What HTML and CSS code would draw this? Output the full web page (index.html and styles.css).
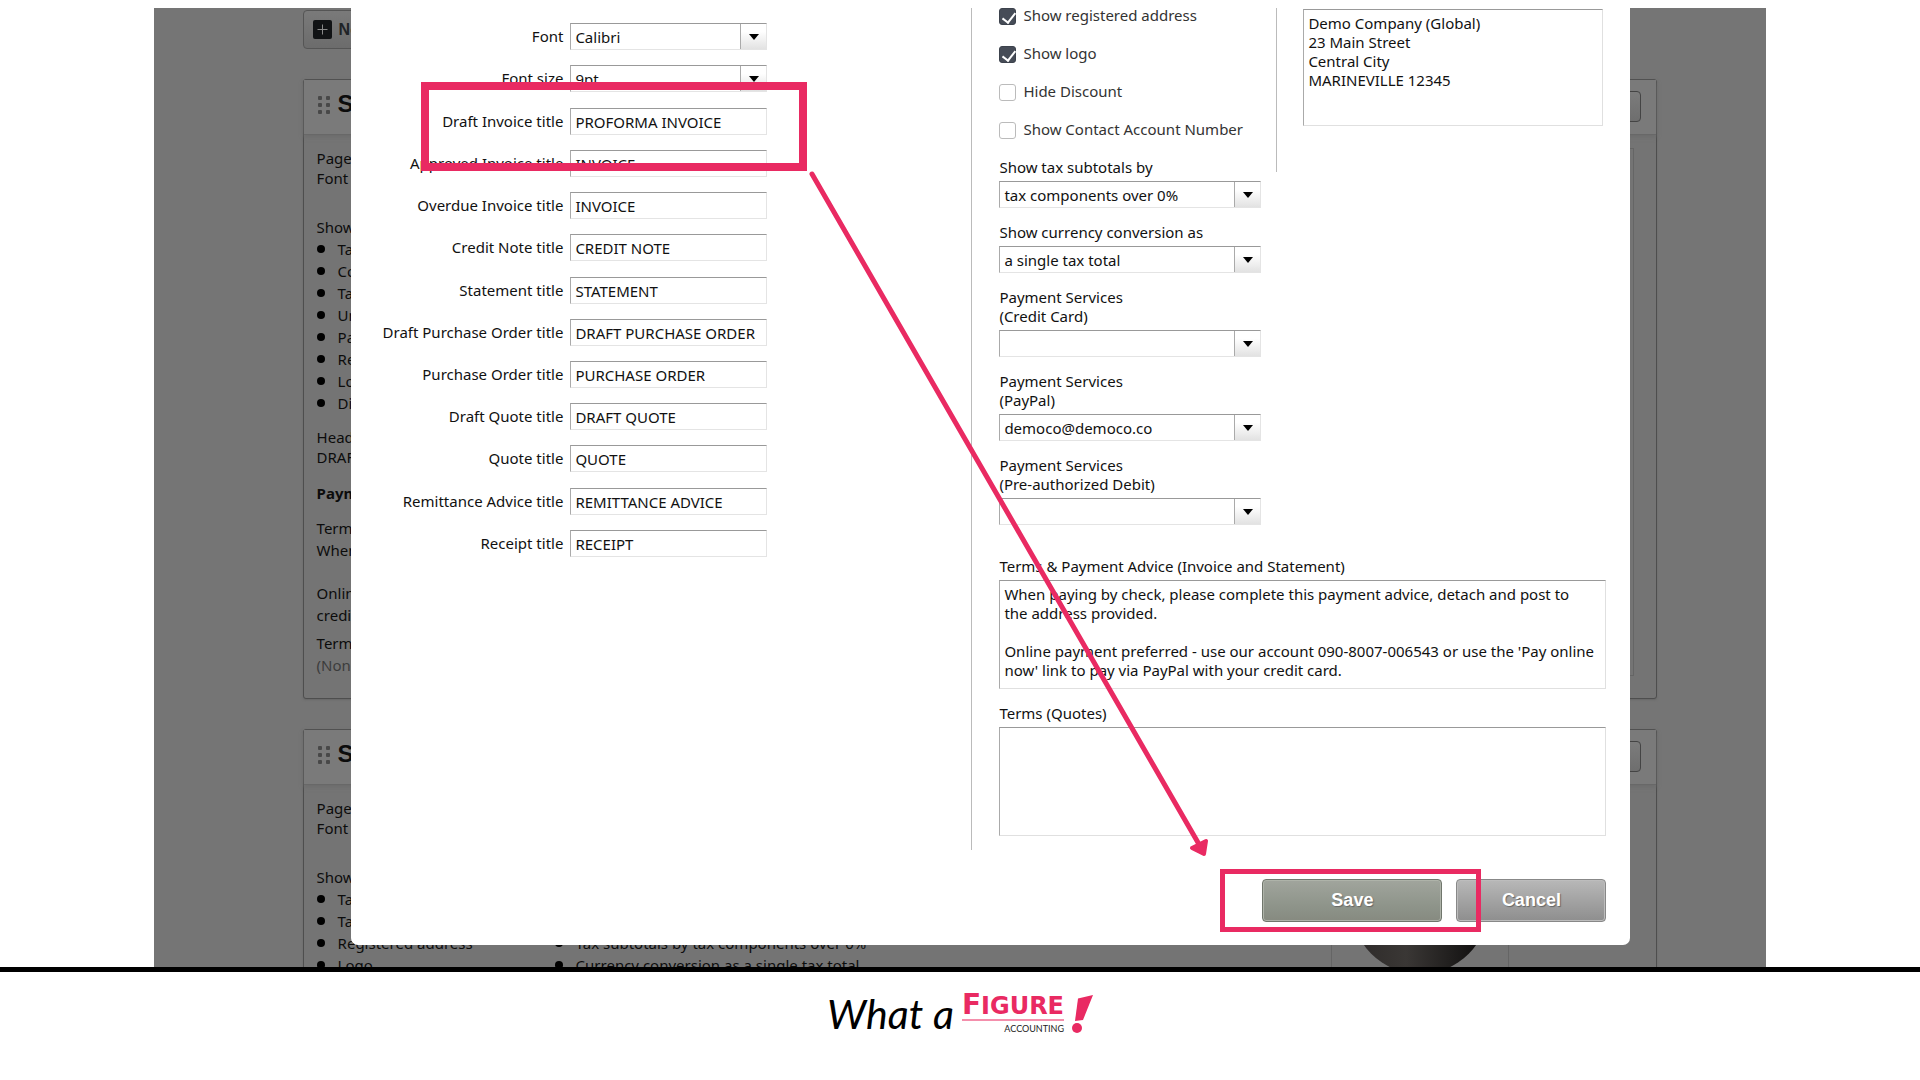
FILE: index.html
```html
<!DOCTYPE html>
<html lang="en">
<head>
<meta charset="utf-8">
<title>Invoice settings</title>
<link rel="stylesheet" href="styles.css">
</head>
<body>
<main class="stage">

  <div class="backdrop" aria-hidden="true">
    <button class="new-theme" type="button" tabindex="-1">
      <svg class="plus" viewBox="0 0 19 19"><rect width="19" height="19" rx="2" fill="#111315"/><path d="M9.500 4.500v10M4.500 9.500h10" stroke="#8a8a8a" stroke-width="1"/></svg>
      New Branding Theme
    </button>

    <section class="card">
      <header class="card-head">
        <svg class="grip" viewBox="0 0 12 20"><g fill="#484848"><rect width="4" height="4" rx="1"/><rect x="8" width="4" height="4" rx="1"/><rect y="7" width="4" height="4" rx="1"/><rect x="8" y="7" width="4" height="4" rx="1"/><rect y="14" width="4" height="4" rx="1"/><rect x="8" y="14" width="4" height="4" rx="1"/></g></svg>
        <h2>Standard</h2>
        <button class="options" type="button" tabindex="-1"></button>
      </header>
      <div class="card-body">
        <div class="details">
          <p>Page size: A4<br>Font Calibri, 9pt</p>
          <div class="shown">
            <h3>Show</h3>
            <ul>
              <li>Tax number</li>
              <li>Column headings</li>
              <li>Tax column</li>
              <li>Unit price</li>
              <li>Payment advice</li>
              <li>Registered address</li>
              <li>Logo</li>
              <li>Discount</li>
            </ul>
          </div>
          <p class="headings">Headings<br>DRAFT INVOICE</p>
          <h4>Payment services</h4>
          <p class="terms">Terms<br>When paying by check</p>
          <p class="online">Online payment<br>credit card</p>
          <p class="quotes">Terms<br><span class="none">(None)</span></p>
        </div>
        <div class="preview preview-edge"></div>
      </div>
    </section>

    <section class="card">
      <header class="card-head">
        <svg class="grip" viewBox="0 0 12 20"><g fill="#484848"><rect width="4" height="4" rx="1"/><rect x="8" width="4" height="4" rx="1"/><rect y="7" width="4" height="4" rx="1"/><rect x="8" y="7" width="4" height="4" rx="1"/><rect y="14" width="4" height="4" rx="1"/><rect x="8" y="14" width="4" height="4" rx="1"/></g></svg>
        <h2>Special</h2>
        <button class="options" type="button" tabindex="-1"></button>
      </header>
      <div class="card-body">
        <div class="details">
          <p>Page size: A4<br>Font Calibri, 9pt</p>
          <div class="shown">
            <h3>Show</h3>
            <ul class="two-columns">
              <li>Tax number</li>
              <li>Column headings</li>
              <li>Tax column</li>
              <li>Unit price</li>
              <li>Registered address</li>
              <li>Tax subtotals by tax components over 0%</li>
              <li>Logo</li>
              <li>Currency conversion as a single tax total</li>
            </ul>
          </div>
        </div>
        <div class="preview">
          <svg viewBox="0 0 176 180"><defs><linearGradient id="bowl" x1="0" x2="1"><stop offset="0" stop-color="#2c2928"/><stop offset=".4" stop-color="#3a3735"/><stop offset="1" stop-color="#0b0a0a"/></linearGradient></defs><circle cx="88" cy="106" r="69" fill="url(#bowl)"/></svg>
        </div>
      </div>
    </section>
  </div>

  <form class="dialog">
    <div class="panes">
      <div class="titles">
        <span></span><input class="field" type="text" aria-label="Margin">
        <label for="font">Font</label>
        <div class="picker"><select class="field" id="font"><option>Calibri</option></select></div>
        <label for="size">Font size</label>
        <div class="picker"><select class="field" id="size"><option>9pt</option></select></div>
        <label for="t1">Draft Invoice title</label><input class="field" id="t1" type="text" value="PROFORMA INVOICE">
        <label for="t2">Approved Invoice title</label><input class="field" id="t2" type="text" value="INVOICE">
        <label for="t3">Overdue Invoice title</label><input class="field" id="t3" type="text" value="INVOICE">
        <label for="t4">Credit Note title</label><input class="field" id="t4" type="text" value="CREDIT NOTE">
        <label for="t5">Statement title</label><input class="field" id="t5" type="text" value="STATEMENT">
        <label for="t6">Draft Purchase Order title</label><input class="field" id="t6" type="text" value="DRAFT PURCHASE ORDER">
        <label for="t7">Purchase Order title</label><input class="field" id="t7" type="text" value="PURCHASE ORDER">
        <label for="t8">Draft Quote title</label><input class="field" id="t8" type="text" value="DRAFT QUOTE">
        <label for="t9">Quote title</label><input class="field" id="t9" type="text" value="QUOTE">
        <label for="t10">Remittance Advice title</label><input class="field" id="t10" type="text" value="REMITTANCE ADVICE">
        <label for="t11">Receipt title</label><input class="field" id="t11" type="text" value="RECEIPT">
      </div>

      <div class="options-pane">
        <div class="upper">
          <div class="choices">
            <div class="checks">
              <label><input type="checkbox" checked>Show registered address</label>
              <label><input type="checkbox" checked>Show logo</label>
              <label><input type="checkbox">Hide Discount</label>
              <label><input type="checkbox">Show Contact Account Number</label>
            </div>
            <div class="group">
              <label for="tax">Show tax subtotals by</label>
              <div class="picker"><select class="field" id="tax"><option>tax components over 0%</option></select></div>
            </div>
            <div class="group">
              <label for="currency">Show currency conversion as</label>
              <div class="picker"><select class="field" id="currency"><option>a single tax total</option></select></div>
            </div>
            <div class="group">
              <label for="card">Payment Services<br>(Credit Card)</label>
              <div class="picker"><select class="field" id="card"><option></option></select></div>
            </div>
            <div class="group">
              <label for="paypal">Payment Services<br>(PayPal)</label>
              <div class="picker"><select class="field" id="paypal"><option>democo@democo.co</option></select></div>
            </div>
            <div class="group">
              <label for="debit">Payment Services<br>(Pre-authorized Debit)</label>
              <div class="picker"><select class="field" id="debit"><option></option></select></div>
            </div>
          </div>
          <div class="rule"></div>
          <textarea class="address" aria-label="Registered address">Demo Company (Global)
23 Main Street
Central City
MARINEVILLE 12345</textarea>
        </div>
        <div class="group wide">
          <label for="advice">Terms &amp; Payment Advice (Invoice and Statement)</label>
          <textarea id="advice">When paying by check, please complete this payment advice, detach and post to
the address provided.

Online payment preferred - use our account 090-8007-006543 or use the 'Pay online now' link to pay via PayPal with your credit card.</textarea>
        </div>
        <div class="group">
          <label for="quotes">Terms (Quotes)</label>
          <textarea id="quotes"></textarea>
        </div>
      </div>
    </div>

    <div class="actions">
      <button class="save" type="button">Save</button>
      <button class="cancel" type="button">Cancel</button>
    </div>

    <div class="mark mark-title"></div>
    <div class="mark mark-save"></div>
    <svg class="arrow" viewBox="0 0 870 860"><g fill="#e92a62" stroke="#e92a62" stroke-linecap="round" stroke-linejoin="round"><path d="M461 166 849 838" stroke-width="5"/><path d="M841 840 855 833 853 846Z" stroke-width="4"/></g></svg>
  </form>
</main>

<footer class="brand">
  <span class="script">What a</span>
  <div class="wordmark">
    <span class="figure"><span class="initial">F</span>IGURE</span>
    <span class="accounting">ACCOUNTING</span>
  </div>
  <svg class="bang" viewBox="0 0 21 38"><path d="M6 3.500 21 0 11 25 3 26Z" fill="#e92a62"/><circle cx="5" cy="33" r="5" fill="#e92a62"/></svg>
</footer>
</body>
</html>
```
FILE: styles.css
```css
* {
  box-sizing: border-box;
}

body {
  margin: 0;
  padding-top: 8px;
  background: #fff;
  color: #111;
  font: 15px/19px "Noto Sans", Tahoma, sans-serif;
}

h2, h3, h4, p, ul {
  margin: 0;
  padding: 0;
}

input, select, textarea, button {
  margin: 0;
  color: inherit;
  font: inherit;
}

.stage {
  position: relative;
  width: 84%;
  margin: 0 auto;
  overflow: hidden;
  background: #757575;
}

/* Dimmed page behind the dialog */
.backdrop {
  position: absolute;
  inset: 0;
  overflow: hidden;
  padding: 2px 109px 0 149px;
  color: #0c0c0c;
  white-space: nowrap;
}

.new-theme {
  display: flex;
  align-items: center;
  gap: 7px;
  height: 39px;
  padding: 0 9px;
  border: 1px solid #555;
  border-radius: 4px;
  background: linear-gradient(#7a7a7a, #6c6c6c);
  color: #1f2326;
  font: bold 16px "Liberation Sans", Arial, sans-serif;
}

.plus {
  width: 19px;
  height: 19px;
}

.card {
  margin-top: 30px;
  border: 1px solid #4e4e4e;
  border-radius: 3px;
  background: #747474;
  box-shadow: 0 1px 2px #666;
}

.card-head {
  display: flex;
  align-items: center;
  gap: 8px;
  height: 55px;
  padding: 0 15px 2px 14px;
  border-bottom: 1px solid #686868;
  background: #7a7a7a;
  box-shadow: 0 2px 4px #6c6c6c;
}

.card-head h2 {
  flex: 1;
  padding-bottom: 4px;
  font: bold 24px/24px "Liberation Sans", Arial, sans-serif;
}

.grip {
  width: 12px;
  height: 20px;
}

.options {
  width: 100px;
  height: 31px;
  border: 1px solid #444;
  border-radius: 4px;
  background: linear-gradient(#7c7c7c, #6e6e6e);
}

.card-body {
  display: flex;
  padding: 13px 22px 22px 13px;
}

.details {
  flex: 1;
  line-height: 20px;
}

.shown {
  margin: 28px 0 13px;
  line-height: 22px;
}

.shown h3, .shown li {
  font-size: 15px;
  font-weight: normal;
}

.shown ul {
  list-style: none;
}

.shown li {
  display: flex;
  align-items: center;
  gap: 13px;
}

.shown li::before {
  content: "";
  width: 8px;
  height: 8px;
  border-radius: 50%;
  background: #000;
}

.two-columns {
  display: grid;
  grid-template-columns: 238px 1fr;
}

.details h4 {
  margin: 15px 0 13px;
  font-size: 15px;
  line-height: 22px;
}

.terms, .online, .quotes {
  line-height: 22px;
}

.online {
  margin: 21px 0 6px;
}

.none {
  color: #3c3c3c;
}

.preview {
  width: 178px;
  margin-right: 125px;
  border: 1px solid #656565;
}

.preview-edge {
  margin-right: 0;
}

.preview svg {
  display: block;
  width: 176px;
  height: 180px;
}

/* Dialog */
.dialog {
  position: relative;
  margin: 0 136px 22px 197px;
  padding: 0 24px 23px 0;
  overflow: hidden;
  border-radius: 0 0 7px 7px;
  background: #fff;
}

.panes {
  display: flex;
}

.titles {
  display: grid;
  flex: 1;
  grid-template-columns: 1fr 197px;
  column-gap: 7px;
  align-content: space-between;
  height: 576px;
  margin-top: -27px;
  padding-right: 204px;
}

.titles label {
  padding-top: 4px;
  text-align: right;
  white-space: nowrap;
}

.field {
  display: block;
  width: 100%;
  height: 27px;
  padding: 1px 4px 0;
  border: 1px solid;
  border-color: #999 #e4e4e4 #e4e4e4 #aaa;
  border-radius: 0;
  outline: 0;
  background: #fff;
  appearance: none;
}

.picker {
  position: relative;
}

.picker .field {
  background: linear-gradient(#aaa, #aaa) right 25px top / 1px 100% no-repeat, linear-gradient(#fff 30%, #e2e2e2) right / 25px 100% no-repeat #fff;
}

.picker::after {
  content: "";
  position: absolute;
  top: 11px;
  right: 8px;
  border: 5px solid transparent;
  border-top: 6px solid #000;
  border-bottom: 0;
  pointer-events: none;
}

.options-pane {
  width: 635px;
  padding: 0 0 14px 27px;
  border-left: 1px solid #bbb;
}

.upper {
  display: flex;
  align-items: flex-start;
}

.choices {
  width: 262px;
}

.checks {
  display: grid;
  gap: 19px;
  margin: -2px 0 19px;
}

.checks label {
  display: flex;
  align-items: flex-end;
  gap: 7px;
  color: #333;
  white-space: nowrap;
}

.checks input {
  position: relative;
  width: 17px;
  height: 17px;
  border: 1px solid #bbb;
  border-radius: 3px;
  background: #fff;
  appearance: none;
}

.checks input:checked {
  border-color: #3c424c;
  background: #464c57;
}

.checks input:checked::after {
  content: "";
  position: absolute;
  top: 1px;
  left: 5px;
  width: 6px;
  height: 11px;
  border: solid #fff;
  border-width: 0 2px 2px 0;
  transform: rotate(38deg);
}

.group + .group {
  margin-top: 15px;
}

.group label {
  display: block;
  margin-bottom: 4px;
}

.rule {
  width: 1px;
  height: 164px;
  margin: 0 26px 0 15px;
  background: #bbb;
}

textarea {
  display: block;
  width: 100%;
  height: 109px;
  padding: 4px 0 0 4px;
  border: 1px solid;
  border-color: #999 #e0e0e0 #e0e0e0 #aaa;
  border-radius: 0;
  outline: 0;
  background: #fff;
  overflow: hidden;
  resize: none;
}

.address {
  flex: 1;
  height: 117px;
  min-width: 0;
  margin: 1px 3px 0 0;
}

.wide {
  margin-top: 32px;
}

.actions {
  display: flex;
  justify-content: flex-end;
  gap: 14px;
  margin-top: 29px;
}

.actions button {
  height: 43px;
  border-radius: 4px;
  color: #fff;
  font: bold 18px "Liberation Sans", Arial, sans-serif;
  text-shadow: 1px 1px 1px #666;
}

.actions .save {
  width: 180px;
  border: 1px solid #70766c;
  background: linear-gradient(#a1a59d, #8f958b 60%, #868a80);
  box-shadow: inset 0 0 0 1px #aeb3a9;
}

.actions .cancel {
  width: 150px;
  border: 1px solid #888;
  background: linear-gradient(#b8b8b8, #8e8e8e);
  box-shadow: inset 0 0 0 1px #bdbdbd;
}

/* Callouts drawn over the dialog */
.mark, .arrow {
  position: absolute;
  pointer-events: none;
}

.mark {
  border: 5px solid #e92a62;
}

.mark-title {
  top: 74px;
  left: 70px;
  width: 386px;
  height: 89px;
  border-width: 8px;
}

.mark-save {
  right: 149px;
  bottom: 13px;
  width: 261px;
  height: 63px;
}

.arrow {
  top: 0;
  left: 0;
  width: 870px;
  height: 860px;
}

/* Brand strip */
.brand {
  display: flex;
  align-items: center;
  justify-content: center;
  gap: 8px;
  height: 102px;
  padding-bottom: 14px;
  border-top: 5px solid #000;
}

.script {
  color: #000;
  font: italic 41px/56px Lato, sans-serif;
}

.wordmark {
  display: grid;
}

.figure {
  border-bottom: 2px solid #f48fac;
  color: #e92a62;
  font: bold 24px/26px "DejaVu Sans", sans-serif;
}

.initial {
  font-size: 28px;
}

.accounting {
  padding-top: 2px;
  color: #222;
  font: 9px/12px Lato, sans-serif;
  text-align: right;
}

.bang {
  width: 21px;
  height: 38px;
}
```
